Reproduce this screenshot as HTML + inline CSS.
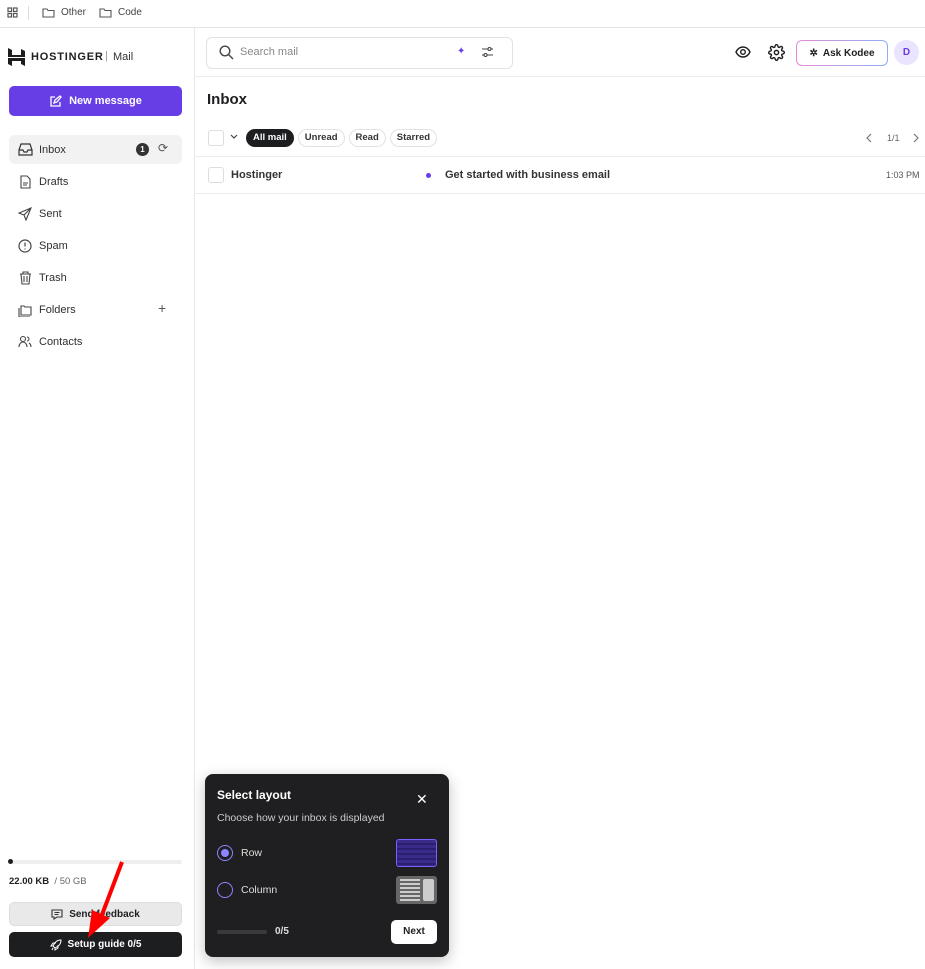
<!DOCTYPE html>
<html><head><meta charset="utf-8"><style>
*{box-sizing:border-box;margin:0;padding:0}
body{width:925px;height:969px;overflow:hidden;background:#fff;font-family:"Liberation Sans",sans-serif;color:#1d1e20;position:relative;font-size:11px}
.abs{position:absolute}
.top{left:0;top:0;width:925px;height:28px;border-bottom:1px solid #e5e5e5}
.side{left:0;top:28px;width:195px;height:941px;border-right:1px solid #e8e8e8}
.nav{position:absolute;left:9px;width:173px;height:29px;display:flex;align-items:center;padding-left:9px;font-size:11px;color:#2f2f33}
.nav svg{margin-right:6px}
.pill{display:inline-block;height:18px;line-height:16px;padding:0 6px;border:1px solid #e2e2e2;border-radius:9px;font-size:9.5px;font-weight:bold;margin-right:4px;color:#333}
</style></head><body>
<div class="abs top">
 <svg class="abs" style="left:7px;top:7px" width="11" height="11" viewBox="0 0 11 11" fill="none" stroke="#555" stroke-width="1.2"><rect x="1" y="1" width="3.5" height="3.5"/><rect x="6.5" y="1" width="3.5" height="3.5"/><rect x="1" y="6.5" width="3.5" height="3.5"/><rect x="6.5" y="6.5" width="3.5" height="3.5"/></svg>
 <div class="abs" style="left:28px;top:6px;width:1px;height:14px;background:#ddd"></div>
 <svg class="abs" style="left:42px;top:7px" width="13" height="11" viewBox="0 0 13 11" fill="none" stroke="#555" stroke-width="1.1"><path d="M1 2h4l1 1.5h6V10H1z"/></svg>
 <div class="abs" style="left:61px;top:7px;font-size:10px;color:#444">Other</div>
 <svg class="abs" style="left:99px;top:7px" width="13" height="11" viewBox="0 0 13 11" fill="none" stroke="#555" stroke-width="1.1"><path d="M1 2h4l1 1.5h6V10H1z"/></svg>
 <div class="abs" style="left:118px;top:7px;font-size:10px;color:#444">Code</div>
</div>
<div class="abs side">
 <svg class="abs" style="left:8px;top:20px" width="17" height="18" viewBox="0 0 17 18" fill="#1d1e20"><path d="M0 0l4 2v5h9V1l4 2v6H0zM0 10h17v8l-4-2v-3H4v5L0 16z"/></svg>
 <div class="abs" style="left:31px;top:23px;font-size:11px;font-weight:bold;letter-spacing:0.8px">HOSTINGER</div>
 <div class="abs" style="left:105px;top:22px;font-size:11px;color:#999">|</div>
 <div class="abs" style="left:113px;top:23px;font-size:11px;color:#333">Mail</div>
 <div class="abs" style="left:9px;top:58px;width:173px;height:30px;background:#673de6;border-radius:5px;color:#fff;font-weight:bold;font-size:11px;display:flex;align-items:center;justify-content:center">
  <svg width="13" height="13" viewBox="0 0 13 13" fill="none" stroke="#fff" stroke-width="1.3" style="margin-right:7px"><path d="M6 2H2v9h9V7M5 8l1-3 5-4 1 1-4 5z"/></svg>New message</div>
 <div class="nav" style="top:107px;background:#f2f2f3;border-radius:6px">
  <svg width="15" height="13" viewBox="0 0 15 13" fill="none" stroke="#333" stroke-width="1.2"><path d="M1 7l2-6h9l2 6v5H1zM1 7h4l1 2h3l1-2h4"/></svg>Inbox
  <div class="abs" style="left:127px;top:8px;width:13px;height:13px;border-radius:50%;background:#333;color:#fff;font-size:8px;font-weight:bold;text-align:center;line-height:13px">1</div>
  <div class="abs" style="left:149px;top:6px;font-size:12px;color:#555">⟳</div>
 </div>
 <div class="nav" style="top:139px"><svg width="15" height="14" viewBox="0 0 15 14" fill="none" stroke="#444" stroke-width="1.1"><path d="M3 1h6l3 3v9H3zM5 8h5M5 10h4"/></svg>Drafts</div>
 <div class="nav" style="top:171px"><svg width="15" height="14" viewBox="0 0 15 14" fill="none" stroke="#444" stroke-width="1.1"><path d="M13 1L1 6l5 2 2 5zM6 8l7-7"/></svg>Sent</div>
 <div class="nav" style="top:203px"><svg width="15" height="14" viewBox="0 0 15 14" fill="none" stroke="#444" stroke-width="1.2"><circle cx="7" cy="7" r="6"/><path d="M7 3.5v4M7 9.5v1"/></svg>Spam</div>
 <div class="nav" style="top:235px"><svg width="15" height="14" viewBox="0 0 15 14" fill="none" stroke="#444" stroke-width="1.1"><path d="M2 3h11M5 3V1h5v2M3 3l1 10h7l1-10M6 5v6M9 5v6"/></svg>Trash</div>
 <div class="nav" style="top:267px"><svg width="15" height="14" viewBox="0 0 15 14" fill="none" stroke="#444" stroke-width="1.1"><path d="M3 3h3l1 1h6v8H3zM1 5v9h11"/></svg>Folders<div class="abs" style="left:149px;top:5px;font-size:14px;color:#555">+</div></div>
 <div class="nav" style="top:299px"><svg width="15" height="14" viewBox="0 0 15 14" fill="none" stroke="#444" stroke-width="1.1"><circle cx="5" cy="4" r="2.5"/><path d="M1 12c0-3 2-5 4-5s4 2 4 5M9 2a2 2 0 010 4M11 8c1.5 1 2 2 2 4"/></svg>Contacts</div>
 <div class="abs" style="left:9px;top:832px;width:173px;height:4px;background:#eee;border-radius:2px"></div>
 <div class="abs" style="left:8px;top:831px;width:5px;height:5px;background:#1d1e20;border-radius:50%"></div>
 <div class="abs" style="left:9px;top:848px;font-size:9.5px"><b>22.00 KB</b> <span style="color:#666">&nbsp;/ 50 GB</span></div>
 <div class="abs" style="left:9px;top:874px;width:173px;height:24px;background:#e9e9ea;border:1px solid #ddd;border-radius:5px;display:flex;align-items:center;justify-content:center;font-weight:bold;font-size:10px">
  <svg width="12" height="11" viewBox="0 0 12 11" fill="none" stroke="#333" stroke-width="1.1" style="margin-right:6px"><path d="M1 1h10v7H6l-3 2V8H1zM3.5 3.5h5M3.5 5.5h4"/></svg>Send feedback</div>
 <div class="abs" style="left:9px;top:904px;width:173px;height:25px;background:#1d1e20;border-radius:5px;display:flex;align-items:center;justify-content:center;font-weight:bold;font-size:10px;color:#fff">
  <svg width="12" height="12" viewBox="0 0 12 12" fill="none" stroke="#fff" stroke-width="1" style="margin-right:6px"><path d="M11 1c-4 0-6 2-8 6l2 2c4-2 6-4 6-8zM3 7L1 7l2-3h3M5 9v2l3-2V6M2 11l1-2"/></svg>Setup guide 0/5</div>
</div>
<div class="abs" style="left:195px;top:76px;width:730px;height:1px;background:#ebebeb"></div>
<div class="abs" style="left:206px;top:37px;width:307px;height:32px;border:1px solid #e2e2e2;border-radius:6px"></div>
<svg class="abs" style="left:219px;top:45px" width="15" height="15" viewBox="0 0 15 15" fill="none" stroke="#444" stroke-width="1.4"><circle cx="6" cy="6" r="4.8"/><path d="M9.5 9.5L14 14"/></svg>
<div class="abs" style="left:240px;top:46px;font-size:11px;color:#888">Search mail</div>
<div class="abs" style="left:457px;top:46px;font-size:10px;color:#673de6">✦</div>
<svg class="abs" style="left:481px;top:46px" width="13" height="12" viewBox="0 0 13 12" fill="none" stroke="#444" stroke-width="1.1"><path d="M1 3h6M10 3h2M1 9h2M6 9h6"/><circle cx="8.5" cy="3" r="1.5"/><circle cx="4.5" cy="9" r="1.5"/></svg>
<svg class="abs" style="left:735px;top:45px" width="16" height="14" viewBox="0 0 16 14" fill="none" stroke="#1d1e20" stroke-width="1.4"><path d="M1 7c2-4 5-5 7-5s5 1 7 5c-2 4-5 5-7 5s-5-1-7-5z"/><circle cx="8" cy="7" r="2.3"/></svg>
<svg class="abs" style="left:768px;top:44px" width="17" height="17" viewBox="0 0 24 24" fill="none" stroke="#1d1e20" stroke-width="2"><circle cx="12" cy="12" r="3"/><path d="M19.4 15a1.7 1.7 0 00.3 1.8l.1.1a2 2 0 11-2.8 2.8l-.1-.1a1.7 1.7 0 00-1.8-.3 1.7 1.7 0 00-1 1.5V21a2 2 0 11-4 0v-.1a1.7 1.7 0 00-1.1-1.5 1.7 1.7 0 00-1.8.3l-.1.1a2 2 0 11-2.8-2.8l.1-.1a1.7 1.7 0 00.3-1.8 1.7 1.7 0 00-1.5-1H3a2 2 0 110-4h.1a1.7 1.7 0 001.5-1.1 1.7 1.7 0 00-.3-1.8l-.1-.1a2 2 0 112.8-2.8l.1.1a1.7 1.7 0 001.8.3H9a1.7 1.7 0 001-1.5V3a2 2 0 114 0v.1a1.7 1.7 0 001 1.5 1.7 1.7 0 001.8-.3l.1-.1a2 2 0 112.8 2.8l-.1.1a1.7 1.7 0 00-.3 1.8V9a1.7 1.7 0 001.5 1H21a2 2 0 110 4h-.1a1.7 1.7 0 00-1.5 1z"/></svg>
<div class="abs" style="left:796px;top:40px;width:92px;height:26px;border-radius:6px;padding:1px;background:linear-gradient(90deg,#e88ad8,#8ab0f0)"><div style="width:100%;height:100%;background:#fff;border-radius:5px;display:flex;align-items:center;justify-content:center;font-size:10px;font-weight:bold">
 <span style="margin-right:5px;font-size:10px">✲</span>Ask Kodee</div></div>
<div class="abs" style="left:894px;top:40px;width:25px;height:25px;border-radius:50%;background:#ebe4ff;color:#673de6;font-size:10px;font-weight:bold;text-align:center;line-height:25px">D</div>
<div class="abs" style="left:207px;top:91px;font-size:15px;font-weight:bold">Inbox</div>
<div class="abs" style="left:208px;top:130px;width:16px;height:16px;border:1px solid #ddd;border-radius:3px"></div>
<svg class="abs" style="left:230px;top:134px" width="8" height="6" viewBox="0 0 8 6" fill="none" stroke="#444" stroke-width="1.2"><path d="M1 1l3 3 3-3"/></svg>
<div class="abs" style="left:246px;top:129px"><span class="pill" style="background:#1d1e20;color:#fff;border-color:#1d1e20">All mail</span><span class="pill">Unread</span><span class="pill">Read</span><span class="pill">Starred</span></div>
<svg class="abs" style="left:866px;top:133px" width="7" height="10" viewBox="0 0 7 10" fill="none" stroke="#777" stroke-width="1.2"><path d="M5 1L1 5l4 4"/></svg>
<div class="abs" style="left:887px;top:133px;font-size:9px;color:#666">1/1</div>
<svg class="abs" style="left:912px;top:133px" width="7" height="10" viewBox="0 0 7 10" fill="none" stroke="#777" stroke-width="1.2"><path d="M2 1l4 4-4 4"/></svg>
<div class="abs" style="left:195px;top:156px;width:730px;height:1px;background:#ebebeb"></div>
<div class="abs" style="left:208px;top:167px;width:16px;height:16px;border:1px solid #ddd;border-radius:3px"></div>
<div class="abs" style="left:231px;top:169px;font-size:11px;font-weight:bold;color:#333">Hostinger</div>
<div class="abs" style="left:426px;top:173px;width:5px;height:5px;border-radius:50%;background:#673de6"></div>
<div class="abs" style="left:445px;top:169px;font-size:11px;font-weight:bold;color:#333">Get started with business email</div>
<div class="abs" style="left:886px;top:170px;font-size:9px;color:#555">1:03 PM</div>
<div class="abs" style="left:195px;top:193px;width:730px;height:1px;background:#ebebeb"></div>
<div class="abs" style="left:205px;top:774px;width:244px;height:183px;background:#1f1f21;border-radius:8px;box-shadow:0 4px 14px rgba(0,0,0,.25);color:#fff">
 <div class="abs" style="left:12px;top:14px;font-size:12px;font-weight:bold">Select layout</div>
 <div class="abs" style="left:211px;top:17px;font-size:14px">✕</div>
 <div class="abs" style="left:12px;top:38px;font-size:10.5px;color:#ccc">Choose how your inbox is displayed</div>
 <div class="abs" style="left:12px;top:71px;width:16px;height:16px;border:1.5px solid #8c85ff;border-radius:50%"><div style="margin:2.5px;width:8px;height:8px;border-radius:50%;background:#8c85ff"></div></div>
 <div class="abs" style="left:36px;top:73px;font-size:10.5px;color:#ddd">Row</div>
 <div class="abs" style="left:191px;top:65px;width:41px;height:28px;border:1px solid #7a5fff;border-radius:3px;background:repeating-linear-gradient(#3a2a8a 0 3px,#2a2070 3px 5px);"></div>
 <div class="abs" style="left:12px;top:108px;width:16px;height:16px;border:1.5px solid #8c85ff;border-radius:50%"></div>
 <div class="abs" style="left:36px;top:110px;font-size:10.5px;color:#ddd">Column</div>
 <div class="abs" style="left:191px;top:102px;width:41px;height:28px;border-radius:3px;background:#666"><div style="position:absolute;left:4px;top:3px;width:20px;height:22px;background:repeating-linear-gradient(#ccc 0 2px,#666 2px 4px)"></div><div style="position:absolute;left:27px;top:3px;width:11px;height:22px;background:#ccc;border-radius:2px"></div></div>
 <div class="abs" style="left:12px;top:156px;width:50px;height:4px;border-radius:2px;background:#3a3a3c"></div>
 <div class="abs" style="left:70px;top:152px;font-size:10px;font-weight:bold;color:#ddd">0/5</div>
 <div class="abs" style="left:186px;top:146px;width:46px;height:24px;background:#fff;border-radius:5px;color:#1d1e20;font-size:10px;font-weight:bold;text-align:center;line-height:24px">Next</div>
</div>
<svg class="abs" style="left:80px;top:858px" width="50" height="84" viewBox="0 0 50 84"><path d="M42 4L20 62" stroke="#f00" stroke-width="4"/><path d="M8 80L12 52L30 60z" fill="#f00"/></svg>
</body></html>
